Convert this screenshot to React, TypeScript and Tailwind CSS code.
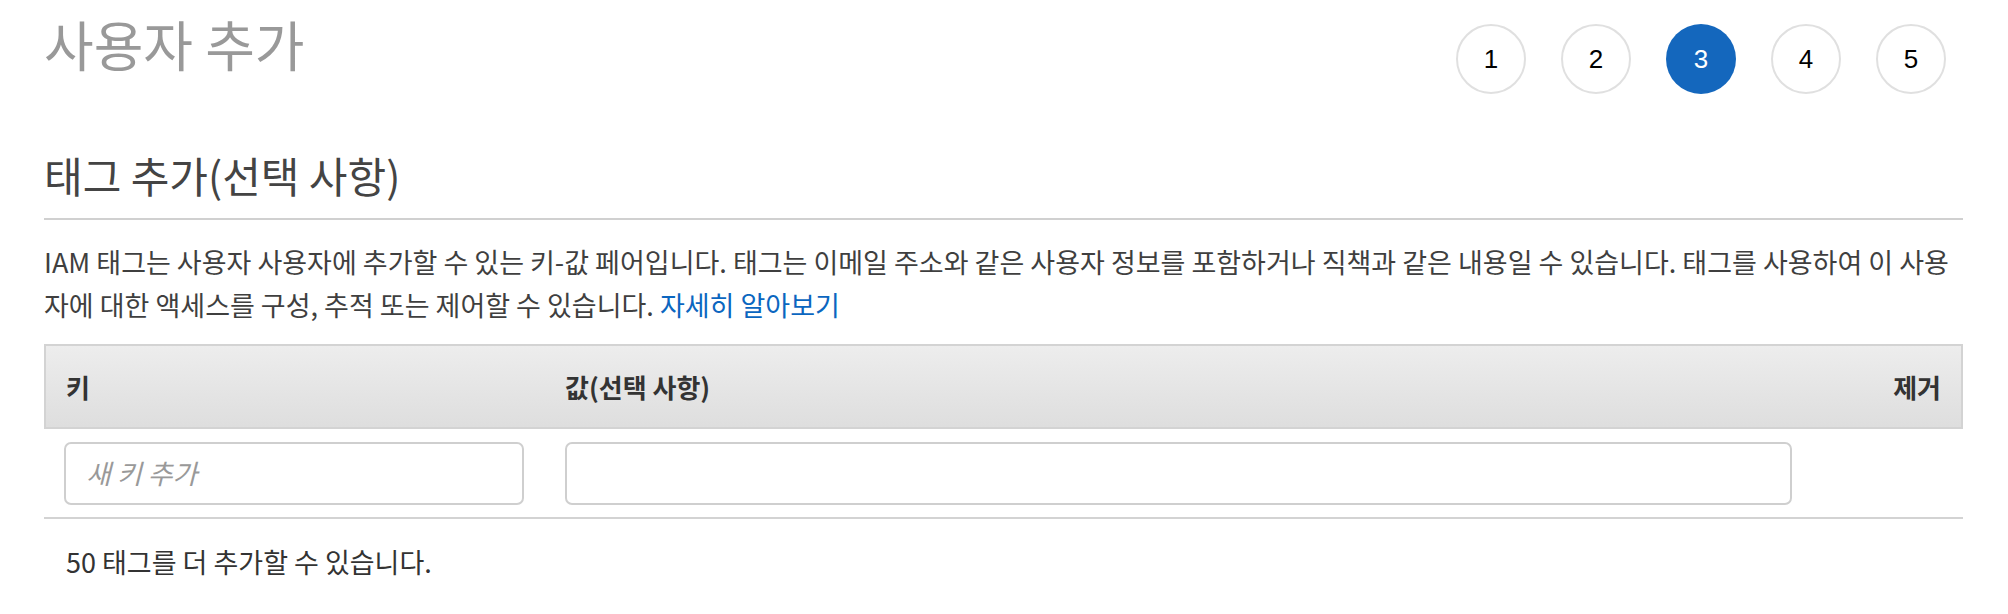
import React from "react";

const steps = [1, 2, 3, 4, 5];

export default function App() {
  return (
    <div className="w-[2008px] h-[614px] bg-white font-['Noto_Sans_CJK_KR',sans-serif] text-[#444] overflow-hidden">
      <div className="pl-[44px] pr-[45px]">
        <div className="flex items-start justify-between">
          <h1 className="mt-[17px] text-[54px] leading-none text-[#999] font-normal">사용자 추가</h1>
          <div className="mt-[24px] mr-[17px] flex gap-[35px]">
            {steps.map((s) => (
              <div
                key={s}
                className={
                  s === 3
                    ? "w-[70px] h-[70px] rounded-full bg-[#1467bd] flex items-center justify-center text-white text-[26px] font-['Liberation_Sans',Arial,sans-serif]"
                    : "w-[70px] h-[70px] rounded-full border-2 border-[#e0e0e0] bg-white flex items-center justify-center text-black text-[26px] font-['Liberation_Sans',Arial,sans-serif]"
                }
              >
                {s}
              </div>
            ))}
          </div>
        </div>

        <h2 className="mt-[60px] text-[42px] leading-none font-normal text-[#444] pb-[22px] border-b-2 border-[#d0d0d0]">
          태그 추가(선택 사항)
        </h2>

        <p className="mt-[20px] text-[27px] leading-[43px] text-[#3f3f3f] whitespace-nowrap">
          IAM 태그는 사용자 사용자에 추가할 수 있는 키-값 페어입니다. 태그는 이메일 주소와 같은 사용자 정보를 포함하거나 직책과 같은 내용일 수 있습니다. 태그를 사용하여 이 사용
          <br />
          자에 대한 액세스를 구성, 추적 또는 제어할 수 있습니다.{" "}
          <a className="text-[#0b66c0]">자세히 알아보기</a>
        </p>

        <div className="mt-[18px] w-[1919px]">
          <div className="grid grid-cols-[501px_1247px_1fr] h-[85px] items-center border-2 border-[#d3d3d3] bg-gradient-to-b from-[#ededed] to-[#dedede] text-[26px] font-bold text-[#333]">
            <div className="pl-[20px]">키</div>
            <div className="pl-[18px]">값(선택 사항)</div>
            <div className="text-right pr-[20px]">제거</div>
          </div>
          <div className="grid grid-cols-[501px_1247px_1fr] items-center pt-[13px] pb-[12px] border-b-2 border-[#d3d3d3]">
            <div className="pl-[20px]">
              <div className="w-[460px] h-[63px] rounded-[7px] border-2 border-[#cfcfcf] bg-white flex items-center pl-[20px] text-[27px] italic text-[#999]">
                새 키 추가
              </div>
            </div>
            <div className="pl-[20px]">
              <div className="w-[1227px] h-[63px] rounded-[7px] border-2 border-[#cfcfcf] bg-white"></div>
            </div>
            <div></div>
          </div>
          <div className="pt-[25px] pl-[22px] text-[27px] leading-[36px] text-[#333]">
            50 태그를 더 추가할 수 있습니다.
          </div>
        </div>
      </div>
    </div>
  );
}
